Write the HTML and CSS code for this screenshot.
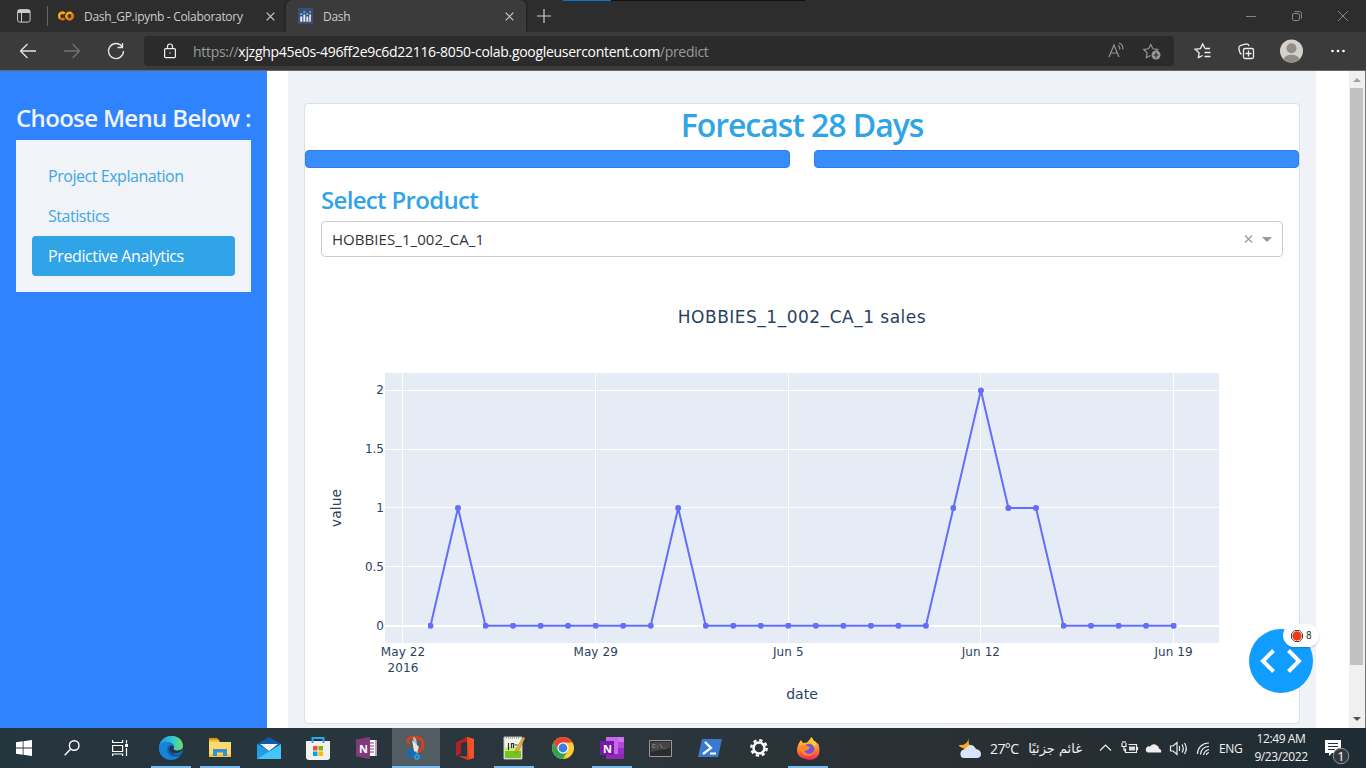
FILE: index.html
```html
<!DOCTYPE html>
<html lang="en">
<head>
<meta charset="utf-8">
<title>Dash</title>
<link rel="stylesheet" href="styles.css">
</head>
<body>
<header class="tabs">
  <svg class="tab-actions" width="14" height="14" viewBox="0 0 14 14"><rect x=".6" y=".6" width="12.5" height="12.5" rx="2" fill="none" stroke="#ccc"/><path d="M1 1h12v3H1z" fill="#ccc"/><path d="M4.500 4v9" stroke="#ccc"/></svg>
  <span class="divider"></span>
  <div class="tab tab-colab">
    <svg width="16" height="16" viewBox="0 0 16 16" fill="none" stroke-width="2.400"><circle cx="11.500" cy="8" r="3.200" stroke="#f9ab00"/><path d="M6.600 5.700A3.200 3.200 0 1 0 6.600 10.300" stroke="#e8710a"/><path d="M6.600 5.700A3.200 3.200 0 0 0 2 10.200" stroke="#f9ab00"/><path d="M9.200 10.300A3.200 3.200 0 0 0 13.800 5.700" stroke="#e8710a"/></svg>
    <span class="tab-title colab-title">Dash_GP.ipynb - Colaboratory</span>
    <svg class="close" width="9" height="9" viewBox="0 0 9 9"><path d="m.7.7 7.6 7.6m0-7.6L.7 8.300"/></svg>
  </div>
  <div class="tab tab-dash">
    <svg width="15" height="16" viewBox="0 0 14 15"><path fill="#3d4d78" d="M0 0h14v15H0z"/><path fill="#e8edf5" d="M2 8h2v5H2zm3-2h1.800v7H5zm2.800 2h1.800v5H7.800zm2.700-2H12v7h-1.500z"/><path fill="#66c7cf" d="M2 5h2v1.500H2zM5 3h1.800v1.500H5zm2.800 2h1.800v1.500H7.800zm2.700-2H12v1.500h-1.500z"/></svg>
    <span class="tab-title">Dash</span>
    <svg class="close" width="9" height="9" viewBox="0 0 9 9"><path d="m.7.7 7.600 7.600m0-7.600L.7 8.300"/></svg>
  </div>
  <svg class="new-tab" width="14" height="14" viewBox="0 0 14 14"><path d="M7 0v14M0 7h14" stroke="#ccc" stroke-width="1.200"/></svg>
  <svg class="load-line" width="242" height="1"><path d="M0 .5h48" stroke="#0078d4"/><path d="M48 .5h194" stroke="#111"/></svg>
  <svg class="win" width="103" height="12" viewBox="0 0 103 12" fill="none" stroke="#858585"><path d="M0 6.500h10M92 1l10 10m0-10L92 11"/><rect x="46.500" y="3.500" width="7" height="7" rx="1.500"/><path d="M48.500 1.500h5q2 0 2 2v5"/></svg>
</header>
<nav class="toolbar">
  <svg width="124" height="20" viewBox="0 0 124 20" fill="none" stroke="#e4e4e4" stroke-width="1.300"><path d="M16 10H.5m7-7-7 7 7 7"/><path d="M44 10h15.500m-7-7 7 7-7 7" stroke="#747474"/><path d="M102.200 5.800A7.500 7.500 0 1 0 103.500 10M102.500 2v4.500h-5"/></svg>
  <div class="address">
    <svg width="12" height="16" viewBox="0 0 12 16" fill="none" stroke="#eee" stroke-width="1.200"><rect x=".6" y="5.600" width="10.800" height="9" rx="1"/><path d="M3.500 5.500V3.500a2.500 2.500 0 0 1 5 0v2"/><circle cx="6" cy="10" r=".7" fill="#eee" stroke="none"/></svg>
    <span class="url"><i>https://</i>xjzghp45e0s-496ff2e9c6d22116-8050-colab.googleusercontent.com<i>/predict</i></span>
    <svg class="address-icons" width="54" height="18" viewBox="0 0 54 18" fill="none" stroke="#949494" stroke-width="1.200"><path d="m1 15 5-12 5 12M2.700 11h6.600M10 3.500a3 3 0 0 1 1.500 4M11 1a6 6 0 0 1 3.800 6.500"/><path d="m42.500 13.500-4.200 2.200.8-4.900-3.400-3.300 4.900-.7L42.700 2.500l2.200 4.300 4.900.7-1.500 1.200"/><circle cx="48" cy="13" r="4.500" fill="#999" stroke="none"/><path d="M45.500 13h5m-2.500-2.500v5" stroke="#2b2b2b"/></svg>
  </div>
  <svg class="tools" width="152" height="24" viewBox="0 0 152 24" fill="none" stroke="#eee" stroke-width="1.300"><path d="m9.700 16.500-4.300 2.200.7-5-4-3.400 5.300-.7L9.700 5l1.900 3.800M11.500 9.500H17M11.500 13.500h6M11.500 17.500h6"/><rect x="50.500" y="9.500" width="10" height="10" rx="1.500"/><path d="M55.500 11.500v6m-3-3h6M48.500 15.500q-1.300-1-2-3l-.7-3.500q0-2 2-2.600l5.700-1.500q2 0 2.600 2.100"/><circle cx="98.500" cy="12" r="11.500" fill="#d4d0cb" stroke="none"/><circle cx="98.500" cy="9.200" r="5" fill="#918c86" stroke="none"/><path d="M90.500 20a8.500 6.500 0 0 1 16 0 11.500 11.500 0 0 1-16 0" fill="#918c86" stroke="none"/><g fill="#fff" stroke="none"><circle cx="139.500" cy="12" r="1.300"/><circle cx="145" cy="12" r="1.300"/><circle cx="150.500" cy="12" r="1.300"/></g></svg>
</nav>
<div class="page">
  <aside class="sidebar">
    <h4>Choose Menu Below :</h4>
    <div class="menu"><a>Project Explanation</a><a>Statistics</a><a class="active">Predictive Analytics</a></div>
  </aside>
  <main class="content">
    <section class="card">
      <h2>Forecast 28 Days</h2>
      <div class="bars"><span></span><span></span></div>
      <div class="card-body">
        <h4>Select Product</h4>
        <div class="select"><span>HOBBIES_1_002_CA_1</span><svg width="30" height="12" viewBox="0 0 30 12"><path d="m3 2.500 7 7m0-7-7 7" stroke="#999" stroke-width="1.200"/><path d="M20 4h10l-5 5z" fill="#999"/></svg></div>
        <svg class="chart" width="962" height="450" viewBox="321 257 962 450">
          <path fill="#e5ecf6" d="M385 373h834v270H385z"/>
          <path d="M402.500 373v270M595.500 373v270M788.500 373v270M980.500 373v270M1173.500 373v270M385 390.500h834M385 449.500h834M385 507.500h834M385 566.500h834" stroke="#fff"/>
          <path d="M385 626h834" stroke="#fff" stroke-width="2"/>
          <polyline class="series" points="430.500,625.700 458,508 485.500,625.700 650.700,625.700 678.200,508 705.700,625.700 925.900,625.700 953.400,508 980.900,390.400 1008.400,508 1036,508 1063.500,625.700 1173.600,625.700"/>
          <polyline class="dots" points="430.500,625.700 458,508 485.500,625.700 513.100,625.700 540.600,625.700 568.100,625.700 595.700,625.700 623.200,625.700 650.700,625.700 678.200,508 705.700,625.700 733.300,625.700 760.800,625.700 788.300,625.700 815.800,625.700 843.400,625.700 870.900,625.700 898.400,625.700 925.900,625.700 953.400,508 980.900,390.400 1008.400,508 1036,508 1063.500,625.700 1091,625.700 1118.600,625.700 1146.100,625.700 1173.600,625.700"/>
          <defs><marker id="dot" viewBox="0 0 6 6" refX="3" refY="3" markerWidth="6" markerHeight="6" markerUnits="userSpaceOnUse"><circle cx="3" cy="3" r="3" fill="#636efa"/></marker></defs>
          <text class="chart-title" x="802" y="323">HOBBIES_1_002_CA_1 sales</text>
          <g class="yticks"><text x="384" y="394">2</text><text x="384" y="453">1.5</text><text x="384" y="512">1</text><text x="384" y="571">0.5</text><text x="384" y="630">0</text></g>
          <g class="xticks"><text x="403" y="656">May 22</text><text x="403" y="672">2016</text><text x="595.700" y="656">May 29</text><text x="788.300" y="656">Jun 5</text><text x="980.900" y="656">Jun 12</text><text x="1173.600" y="656">Jun 19</text></g>
          <text class="axis-title" x="802" y="699">date</text>
          <text class="axis-title" transform="translate(340.500 508) rotate(-90)">value</text>
        </svg>
      </div>
    </section>
  </main>
  <div class="scroll"><svg width="17" height="657" viewBox="0 0 17 657"><path fill="#f0f0f0" d="M0 0h16v657H0z"/><path fill="#c1c1c1" d="M1 17h13v577H1z"/><path fill="#a3a3a3" d="m4 11 4-4 4 4z"/><path fill="#505050" d="m4 646 4 4 4-4z"/><path fill="#777" d="M16 0h1v657h-1z"/></svg></div>
  <div class="debug"><svg width="64" height="64" viewBox="0 0 64 64"><circle cx="32" cy="32" r="32" fill="#119dff"/><path d="M24.500 21.500 14 32l10.500 10.500M39.500 21.500 50 32 39.500 42.500" fill="none" stroke="#fff" stroke-width="4"/></svg><div class="errors"><svg width="12" height="12" viewBox="0 0 12 12"><path d="M3.700.5h4.600l3.200 3.200v4.600l-3.200 3.200H3.700L.5 8.300V3.700z" fill="#fff" stroke="#444"/><circle cx="6" cy="6" r="4.700" fill="#ef3a18"/></svg><span>8</span></div></div>
</div>
<footer class="taskbar">
  <div class="apps">
    <span><svg width="16" height="16" viewBox="0 0 16 16" fill="#fff"><path d="m0 2.300 6.700-1v6.300H0zM7.500 1.200 16 0v7.600H7.500zM0 8.400h6.700v6.300L0 13.700zM7.500 8.400H16V16l-8.500-1.200z"/></svg></span>
    <span><svg width="16" height="16" viewBox="0 0 16 16" fill="none" stroke="#fff" stroke-width="1.400"><circle cx="10.200" cy="5.500" r="4.800"/><path d="M6.700 9 .7 15.300"/></svg></span>
    <span><svg width="16" height="16" viewBox="0 0 16 16" fill="none" stroke="#fff" stroke-width="1.200"><path d="M.6 0v2.500h10V0M.6 5.500h10v6H.6zM.6 16v-2h10v2M14.500 0v3.500m0 4.500v8"/><path d="M13 4h3v3h-3z" fill="#fff" stroke="none"/></svg></span>
    <span class="open first"><svg width="24" height="24" viewBox="0 0 24 24"><defs><linearGradient id="edge"><stop stop-color="#1793dc"/><stop offset=".55" stop-color="#33c5d8"/><stop offset="1" stop-color="#68e35b"/></linearGradient></defs><circle cx="12" cy="12" r="12" fill="#1768b8"/><path d="M0 11C1-3 23-4 24 9.500c0 5.500-7 6.500-9.500 4.500-1.300-1 1-1.600.6-4C14 5 4 4.500 0 11z" fill="url(#edge)"/><path d="M0 12c0-7 12-8 14-3-4-1-7 2-6 6 1 6 8 8 13 4-4 8-21 6-21-7z" fill="#1484d6"/><path d="M10.500 9.500C8 13 10 20 18 20.200q3 0 4-1.700c-4 2.300-8 .5-8-2.500-3 .1-4-3-3.500-6.500z" fill="#14478d"/><path d="M12 9.500c-3 3-1 7 4 7.500 4 0 7-2 8-5-3 3-7.500 3-9 1.500-1.200-1 1-3-3-4z" fill="#25333b"/></svg></span>
    <span class="open"><svg width="22" height="20" viewBox="0 0 22 20"><path d="M0 1h9l2 3h11v15H0z" fill="#f3c348"/><path d="M0 0h8l2 2H0z" fill="#dc950f"/><path d="M0 4h22v12H0z" fill="#fed971"/><path d="M4 18v-7h14v7h-4v-3.500H8V18z" fill="#398fd0"/></svg></span>
    <span><svg width="24" height="22" viewBox="0 0 24 22"><path d="M0 7 12 0l12 7v15H0z" fill="#0f5ba7"/><path d="M3 7h18l-9 7z" fill="#f6f6f6"/><path d="m0 7 24 15H0z" fill="#28a7e9"/><path d="M24 7v15H0z" fill="#45c6f6"/><path d="M0 7v15l12-7.500z" fill="#1e9fe6"/></svg></span>
    <span><svg width="24" height="23" viewBox="0 0 24 23"><path d="M6.500 6V1h11v5" fill="none" stroke="#28aaf1" stroke-width="2"/><path d="M0 4h24v16q0 3-3 3H3q-3 0-3-3z" fill="#f1f1f1"/><path d="M7 9h4.500v4.500H7z" fill="#f25022"/><path d="M12.500 9H17v4.500h-4.500z" fill="#7fba00"/><path d="M7 14.500h4.500V19H7z" fill="#00a4ef"/><path d="M12.500 14.500H17V19h-4.500z" fill="#ffb900"/><path d="M6.500 6V4m11 2V4" stroke="#28aaf1" stroke-width="2"/></svg></span>
    <span><svg width="23" height="22" viewBox="0 0 23 22"><path d="M12 3h9v16h-9z" fill="#fff"/><path d="M13 6h5m-5 3h5m-5 3h5m-5 3h5M20 3v16" stroke="#80397b"/><path d="m0 2.500 14-2.500v22L0 19.500z" fill="#80397b"/><text x="3" y="15.500" class="n-logo">N</text></svg></span>
    <span class="current"><svg width="20" height="24" viewBox="0 0 20 24"><path d="M3 8C0 3 3 1.500 8 1.500c6 0 9 2 9 6.500s-2 7-5 7" fill="none" stroke="#cf4420" stroke-width="3.200"/><path d="M7 1q3 0 3.500 4L12 17l-3 1z" fill="#b9bcbe"/><path d="m6 4 7 7-2 5-3-1z" fill="#e3e4e4"/><circle cx="4" cy="17.500" r="2.600" fill="none" stroke="#0870c8" stroke-width="2.400"/><path d="m6.500 18 4-1.500" stroke="#0870c8" stroke-width="2"/><circle cx="11" cy="21" r="2" fill="none" stroke="#199ee4" stroke-width="2"/></svg></span>
    <span><svg width="18" height="23" viewBox="0 0 18 23"><path d="m0 6 11-6 7 2v19l-6 2-10-4 9 .5V4L5 6v10l-5 3z" fill="#d93b1f"/><path d="M11 0 0 6v13l5-3V6l6-2z" fill="#b52028"/><path d="m11 0 7 2v19l-5 1z" fill="#ef5128"/></svg></span>
    <span class="open"><svg width="22" height="24" viewBox="0 0 22 24"><path d="M1 1h18v22H1z" fill="#f3f7ea" stroke="#bbb"/><path d="M2 12h16v10H2z" fill="#75c424"/><path d="M2 11h16v4H2z" fill="#c7ef72"/><path d="M5.500 14V7m3 5V7.500h2V12M11.500 9h3" fill="none" stroke="#333" stroke-width="1.200"/><path d="m12 17 1-4 7-12 2 1-6 12z" fill="#efaf32" stroke="#9b661a" stroke-width=".5"/><path d="M3 2h14" stroke="#777" stroke-dasharray="1 1"/></svg></span>
    <span><svg width="22" height="22" viewBox="0 0 22 22"><circle cx="11" cy="11" r="11" fill="#ffcc32"/><path d="M1.500 5.500A11 11 0 0 1 20.500 5.500H11A5.500 5.500 0 0 0 6.200 13.700z" fill="#e54335"/><path d="M1.500 5.500A11 11 0 0 0 11 22l4.800-8.300a5.500 5.500 0 0 1-9.600 0z" fill="#2da451"/><circle cx="11" cy="11" r="5.500" fill="#fff"/><circle cx="11" cy="11" r="4.400" fill="#3b7de9"/></svg></span>
    <span class="open"><svg width="24" height="22" viewBox="0 0 24 22"><path d="M6 0h18v22H6z" fill="#ca64ea"/><path d="M18 0h6v5h-6z" fill="#ce73eb"/><path d="M18 5h6v6h-6z" fill="#ae4bd5"/><path d="M18 11h6v6h-6z" fill="#9332bf"/><path d="M6 17h18v5H6z" fill="#8c28b4"/><path d="M0 4h14v14H0z" fill="#7719aa"/><text x="3" y="15.500" class="n-logo">N</text></svg></span>
    <span class="cmd"><svg width="23" height="17" viewBox="0 0 23 17"><path d="M.5.500h22v16H.5z" fill="#2c2c2c" stroke="#999"/><path d="M2 2h19v6L2 12z" fill="#454545"/><text x="3" y="7.500" class="cmd-text">C:\_</text></svg></span>
    <span><svg width="24" height="18" viewBox="0 0 24 18"><path d="M4 0h20l-4 18H0z" fill="#3979d0"/><path d="m7 3 6 6-8 6M12 14.500h6" fill="none" stroke="#fff" stroke-width="2.200"/></svg></span>
    <span><svg width="18" height="18" viewBox="0 0 18 18" fill="none" stroke="#fff"><circle cx="9" cy="9" r="5.500" stroke-width="2.500"/><circle cx="9" cy="9" r="7.700" stroke-width="2.400" stroke-dasharray="3.200 2.850"/></svg></span>
    <span class="open"><svg width="23" height="23" viewBox="0 0 23 23"><defs><linearGradient id="fox" x2="0" y2="1"><stop stop-color="#ffe14a"/><stop offset=".5" stop-color="#ff8d29"/><stop offset="1" stop-color="#f0255c"/></linearGradient></defs><path d="M2 6 4 3l2 3 4-.5L15 0c1 4 3 4 4 5l1 2 1-1c6 17-8 18-12 16C0 21-2 14 2 6z" fill="url(#fox)"/><circle cx="12" cy="12" r="5.300" fill="#7552d8"/><path d="m2 9 6-1 5 2-2 3-4 1c3 5 10 3 11-2 0 9-14 10-16-3z" fill="#ff8a22"/><path d="M14 0c-2 5 2 5 3 10l3-4c-2-1-5-3-6-6z" fill="#ffce38"/></svg></span>
  </div>
  <div class="tray">
    <svg width="23" height="21" viewBox="0 0 23 21"><path d="M10 0q-2 7 4 9-5 6-10 1-4-1-4-3 8 1 10-7z" fill="#f9a91b"/><path d="M4 20a4.500 4.500 0 0 1-.5-8Q7 11 8 9q5-5 9 2 5 1 5 5 0 4-4 4z" fill="#d6e5fb"/></svg>
    <span class="temp">27°C</span><span class="weather" dir="rtl" lang="ar">غائم جزئيًا</span>
    <svg class="tray-icons" width="112" height="18" viewBox="0 0 112 18" fill="none" stroke="#eee" stroke-width="1.200"><path d="m1 11.500 5.500-5.500L12 11.500M29.500 5.500h8v8h-11v-4M38.500 8v3M23 4v3.500h4V4m-2 4v3q0 1 2 1M24 2v2m2-2v2"/><path d="M30 7.500h6v4h-6z" fill="#ddd" stroke="none"/><path d="M49 13.500q-3-1-2-4t4-2q3-4 7-1 2 1 2 3 3 1 2 4z" fill="#eee" stroke="none"/><path d="M71.500 7v5H74l4 3.500v-12L74 7zM80.500 7v5M83 5.500q2.500 4 0 8M85.500 4q3.500 5.500 0 11"/><path d="M98.500 15A11 11 0 0 1 110 4M101.500 15.500a8 8 0 0 1 8.500-8M104.500 16q1-4.500 5.500-5.500M107.500 16q0-2 2.500-2.500"/></svg>
    <span class="eng">ENG</span>
    <div class="clock"><span>12:49 AM</span><span>9/23/2022</span></div>
    <svg class="notice" width="25" height="26" viewBox="0 0 25 26"><path d="M0 0h16v13H7l-3 3v-3H0z" fill="#fff"/><path d="M3 3.500h10M3 6.500h10M3 9.500h7" stroke="#24333a"/><circle cx="16" cy="16" r="7.800" fill="#333b40" stroke="#89939a"/><text x="16" y="20.500" class="count">1</text></svg>
  </div>
</footer>
</body>
</html>
```
FILE: styles.css
```css
* { box-sizing: border-box; }
body { margin: 0; width: 1366px; height: 768px; overflow: hidden; display: flex; flex-direction: column; font-family: "Open Sans", "Noto Sans", sans-serif; background: #fff; }
svg { display: block; flex: none; }
h2, h4 { margin: 0; font-weight: 600; color: #2fa4e7; white-space: nowrap; }
.tabs { position: relative; height: 32px; flex: none; display: flex; align-items: center; background: #2d2d2d; }
.tab-actions { margin-left: 17px; }
.divider { width: 1px; height: 20px; margin-left: 16px; background: #666; }
.tab { height: 32px; display: flex; align-items: center; color: #ccc; font-size: 12px; white-space: nowrap; }
.tab-colab { width: 238px; padding-left: 10px; }
.tab-title { margin-left: 10px; letter-spacing: -.3px; }
.close { margin-left: auto; margin-right: 12px; stroke: #ccc; stroke-width: 1.2; }
.tab-colab .close { margin-right: 11px; }
.tab-dash { width: 240px; padding-left: 12px; background: #3b3b3b; border-radius: 6px 6px 0 0; box-shadow: 0 0 3px #111; clip-path: inset(0 -3px 0 -3px); }
.new-tab { margin-left: 11px; }
.load-line { position: absolute; left: 563px; top: 0; }
.win { margin-left: auto; margin-right: 17px; }
.toolbar { height: 39px; flex: none; display: flex; align-items: center; padding: 0 20px; background: #3b3b3b; border-bottom: 1px solid #676767; }
.toolbar > svg:first-child { margin-top: -1px; }
.address { width: 1030px; height: 30px; display: flex; align-items: center; padding-left: 20px; padding-right: 12px; border-radius: 4px; background: #2b2b2b; }
.url { margin-left: 17px; font-size: 14px; letter-spacing: -.3px; color: #fff; white-space: nowrap; }
.url i { font-style: normal; color: #9a9a9a; }
.address-icons { margin-left: auto; }
.tools { margin-left: 19px; }
.page { position: relative; height: 657px; flex: none; display: flex; overflow: hidden; background: #fff; }
.sidebar { width: 267px; flex: none; padding: 33px 16px; background: #2f83ff; }
.sidebar h4 { height: 36px; line-height: 28px; font-size: 24px; letter-spacing: -.66px; color: #f0f3f8; }
.menu { padding: 16px; background: #f0f3f8; height: 152px; }
.menu a { display: block; height: 40px; padding-left: 16px; line-height: 40px; font-size: 16px; letter-spacing: -.45px; color: #3ea7e5; white-space: nowrap; }
.menu .active { border-radius: 4px; background: #2fa4e7; color: #fff; letter-spacing: -.38px; }
.content { width: 1028px; margin-left: 21px; flex: none; padding: 32px 16px 4px; background: #eff3f8; }
.card { height: 621px; border: 1px solid #dcdfe3; border-radius: 4px; background: #fff; }
h2 { height: 46px; line-height: 41px; font-size: 32px; text-align: center; letter-spacing: -1.05px; }
.bars { display: grid; grid-template-columns: 1fr 1fr; gap: 24px; height: 18px; }
.bars span { border: 1px solid #2f7ce2; border-radius: 4px; background: #378dfc; }
.card-body { padding: 16px; }
.card-body h4 { height: 37px; line-height: 31px; font-size: 24px; letter-spacing: -.68px; }
.select { height: 36px; padding: 0 10px; display: flex; align-items: center; border: 1px solid #ccc; border-radius: 4px; font-size: 15px; letter-spacing: .06px; color: #333; }
.select svg { margin-left: auto; }
.chart { font-family: "DejaVu Sans", sans-serif; fill: #2a3f5f; }
.chart-title { font-size: 17px; letter-spacing: .5px; text-anchor: middle; }
.xticks { font-size: 12px; letter-spacing: .1px; text-anchor: middle; }
.yticks { font-size: 12px; text-anchor: end; }
.axis-title { font-size: 14px; text-anchor: middle; }
.series { fill: none; stroke: #636efa; stroke-width: 2; }
.dots { fill: none; stroke: none; marker: url(#dot); }
.scroll { margin-left: auto; width: 17px; }
.debug { position: absolute; left: 1249px; top: 558px; }
.errors { position: absolute; left: 34px; top: -5px; width: 36px; height: 23px; border-radius: 12px; display: flex; align-items: center; padding-left: 8px; background: #fff; box-shadow: 0 1px 2px #0003; font: 10px Roboto, sans-serif; color: #333; }
.errors span { margin-left: 3px; }
.taskbar { height: 40px; flex: none; display: flex; justify-content: space-between; background: linear-gradient(90deg, #25353e, #2b363c 45%, #292f32 72%, #1e2c34); color: #f2f2f2; }
.apps { display: flex; }
.apps span { width: 48px; height: 40px; display: flex; justify-content: center; align-items: center; position: relative; }
.apps .first { margin-left: 3px; }
.apps .first ~ span { margin-left: 1px; }
.apps .cmd { padding-right: 1px; }
.apps .current { background: #515d63; box-shadow: inset 0 -2px #76b9ed; }
.apps .open::after { content: ""; position: absolute; left: 4px; bottom: 0; width: 40px; height: 2px; background: #76b9ed; }
.n-logo { font: bold 11px "Open Sans", sans-serif; fill: #fff; }
.cmd-text { font: 6px "Liberation Mono", monospace; fill: #aaa; }
.tray { width: 407px; display: flex; align-items: center; font-size: 14px; white-space: nowrap; }
.temp { width: 30px; margin-left: 8px; letter-spacing: -.6px; }
.weather { width: 53px; margin-left: 9px; font-family: "DejaVu Sans", sans-serif; font-size: 13px; }
.tray-icons { margin-left: 17px; }
.eng { margin-left: 8px; font-size: 12px; width: 24px; letter-spacing: -.3px; }
.clock { width: 64px; margin-left: 6px; display: flex; flex-direction: column; align-items: center; font-size: 12px; line-height: 18px; letter-spacing: -.4px; }
.notice { margin-left: 12px; margin-top: 9px; }
.count { font: 13px "Open Sans", sans-serif; fill: #fff; text-anchor: middle; }
```
